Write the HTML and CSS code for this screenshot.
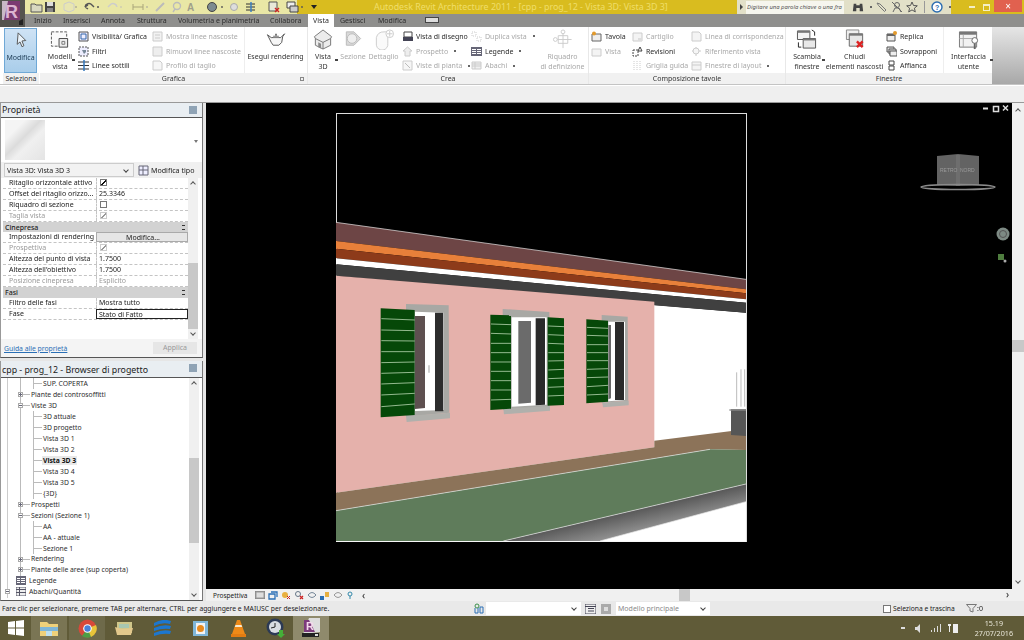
FILE: index.html
```html
<!DOCTYPE html>
<html lang="it">
<head>
<meta charset="utf-8">
<title>Autodesk Revit Architecture 2011</title>
<link rel="stylesheet" href="styles.css">
</head>
<body>
<div class="app">
  <header class="head">
    <div class="logo"><svg width="25" height="27" viewBox="0 0 25 27"><rect width="25" height="27" fill="#55544e"/><path d="M2 1h18v19H2z" fill="#7b3a72"/><path d="M2 1h6L4 20H2z" fill="#c9b9c6"/><text x="5" y="18" class="logo-r">R</text><path d="M19 21l4-2v6h-4z" fill="#222"/></svg></div>
    <div class="titlebar">
      <div class="qat">
        <svg width="14" height="12" viewBox="0 0 14 12"><path d="M1 3h4l1 1h6v7H1z" fill="#d8d8c0" stroke="#555"/></svg>
        <svg width="12" height="12" viewBox="0 0 12 12"><path d="M1 1h10v10H1z" fill="#444"/><path d="M3 1h6v4H3z" fill="#ddd"/><path d="M3 7h6v4H3z" fill="#888"/></svg>
        <svg class="gap-s" width="16" height="12" viewBox="0 0 16 12"><path d="M3 3l5-2 5 2v6l-5 2-5-2z" fill="#e8e6b0" stroke="#ccc"/><circle cx="15" cy="6" r=".8" fill="#888"/></svg>
        <svg class="gap-s" width="18" height="12" viewBox="0 0 18 12"><path d="M3 6a4 4 0 0 1 7-2l2 2M3 6l3-2M3 6l3 2" fill="none" stroke="#555" stroke-width="1.4"/><circle cx="16" cy="6" r="1" fill="#555"/></svg>
        <svg class="gap-s" width="18" height="12" viewBox="0 0 18 12"><path d="M12 6a4 4 0 0 0-7-2L3 6" fill="none" stroke="#ccc" stroke-width="1.4"/><circle cx="16" cy="6" r=".8" fill="#bbb"/></svg>
        <span class="qat-gap"></span>
        <svg width="18" height="12" viewBox="0 0 18 12"><path d="M2 3v6M12 3v6M2 6h10" stroke="#a9a57a" fill="none"/><circle cx="16" cy="6" r=".8" fill="#999"/></svg>
        <svg class="gap-s" width="12" height="12" viewBox="0 0 12 12"><path d="M2 10l8-8" stroke="#bbb" stroke-width="2"/></svg>
        <svg class="gap-s" width="12" height="12" viewBox="0 0 12 12"><circle cx="6" cy="5" r="3.5" fill="none" stroke="#bbb" stroke-width="1.4"/><path d="M4 8l-2 3" stroke="#bbb" stroke-width="1.4"/></svg>
        <span class="qat-a">A</span>
        <span class="qat-sep"></span>
        <svg width="18" height="12" viewBox="0 0 18 12"><circle cx="6" cy="6" r="4.5" fill="#7d8b90" stroke="#444"/><circle cx="16" cy="6" r=".9" fill="#555"/></svg>
        <svg class="gap-s" width="10" height="12" viewBox="0 0 10 12"><circle cx="5" cy="6" r="3.5" fill="#ddd" stroke="#aaa"/></svg>
        <svg class="gap-m" width="11" height="12" viewBox="0 0 11 12"><path d="M1 3h9M1 6h9M1 9h9" stroke="#333"/><path d="M6 1v10" stroke="#3a7fc0" stroke-width="1.5"/></svg>
        <span class="qat-sep"></span>
        <svg width="12" height="12" viewBox="0 0 12 12"><path d="M1 1h8v9H1z" fill="#e8e8d8" stroke="#555"/><path d="M7 7l4 4M11 7l-4 4" stroke="#c22" stroke-width="1.4"/></svg>
        <svg class="gap-m" width="20" height="12" viewBox="0 0 20 12"><path d="M1 1h8v6H1z" fill="#eee" stroke="#444"/><path d="M4 5h8v6H4z" fill="#ccc" stroke="#444"/><circle cx="16" cy="6" r=".9" fill="#555"/></svg>
        <span class="qat-more"></span>
      </div>
      <div class="title">Autodesk Revit Architecture 2011 - [cpp - prog_12 - Vista 3D: Vista 3D 3]</div>
      <div class="search">
        <span class="search-arrow"></span>
        <span class="search-box">Digitare una parola chiave o una fra</span>
        <svg width="12" height="11" viewBox="0 0 14 11"><path d="M2 1h3v9H1zM9 1h3l1 9H9zM5 3h4v3H5z" fill="#444"/></svg>
        <i class="dot"></i>
        <svg width="13" height="12" viewBox="0 0 13 12"><path d="M2 2l3 1 6 6-1.5 1.5-6-6z" fill="none" stroke="#777"/></svg>
        <svg width="12" height="12" viewBox="0 0 12 12"><circle cx="6" cy="4" r="2.5" fill="none" stroke="#666"/><path d="M2 11l2-4h4l2 4M1 1l10 10" fill="none" stroke="#666"/></svg>
        <svg width="12" height="12" viewBox="0 0 12 12"><path d="M6 1l1.5 3.5 3.8.3-2.9 2.4.9 3.7L6 8.9 2.700 10.900l.9-3.700L.7 4.800l3.800-.3z" fill="none" stroke="#555"/></svg>
        <span class="search-sep"></span>
        <svg width="12" height="12" viewBox="0 0 12 12"><circle cx="6" cy="6" r="5" fill="#fff" stroke="#2a6cb0" stroke-width="1.4"/><text x="4" y="9" class="help-q">?</text></svg>
        <i class="dot"></i>
      </div>
      <div class="winbtns">
        <span class="wb-min"></span>
        <span class="wb-max"></span>
        <span class="wb-close">×</span>
      </div>
    </div>
    <nav class="tabs">
      <span class="tab t1">Inizio</span>
      <span class="tab t2">Inserisci</span>
      <span class="tab t3">Annota</span>
      <span class="tab t4">Struttura</span>
      <span class="tab t5">Volumetria e planimetria</span>
      <span class="tab t6">Collabora</span>
      <span class="tab active">Vista</span>
      <span class="tab t8">Gestisci</span>
      <span class="tab t9">Modifica</span>
      <span class="tab-pill"></span>
    </nav>
  </header>

  <section class="ribbon">
    <div class="group g-sel">
      <div class="body">
        <div class="big selected">
          <svg class="ic" width="22" height="22" viewBox="0 0 22 22"><path d="M8 3l8 8-4 .5 2 5-2 1-2-5-3 2.500z" fill="#e8f2fa" stroke="#555"/></svg>
          <span>Modifica</span>
        </div>
      </div>
      <div class="label">Seleziona</div>
    </div>
    <div class="group g-gra">
      <div class="body">
        <div class="big w-mod">
          <svg class="ic" width="22" height="22" viewBox="0 0 22 22"><path d="M2 3h16v15H2z" fill="#fafafa" stroke="#555" stroke-dasharray="3 1.500"/><path d="M10 10h9v9h-9z" fill="#eee" stroke="#444"/><path d="M13 13h3v3h-3z" fill="none" stroke="#777"/></svg>
          <span>Modelli<br>vista</span><i class="caret"></i>
        </div>
        <div class="col w-vis">
          <div class="item"><svg width="11" height="11" viewBox="0 0 11 11"><path d="M1 1h9v9H1z" fill="#eef" stroke="#555"/><path d="M3 3h5v5H3z" fill="none" stroke="#36a"/></svg>Visibilità/ Grafica</div>
          <div class="item"><svg width="11" height="11" viewBox="0 0 11 11"><path d="M1 1h9v9H1z" fill="#eef" stroke="#555" stroke-dasharray="2 1"/><path d="M4 4h4v2L6 8z" fill="#789"/></svg>Filtri</div>
          <div class="item"><svg width="11" height="11" viewBox="0 0 11 11"><path d="M0 2h11M0 5.500h11M0 9h11" stroke="#333"/><path d="M6 0v11" stroke="#37b" stroke-width="1.500"/></svg>Linee sottili</div>
        </div>
        <div class="col dim w-mos">
          <div class="item"><svg width="11" height="11" viewBox="0 0 11 11"><path d="M1 1h9v9H1z" fill="#f2f2f2" stroke="#ccc"/><path d="M3 4h5M3 7h5" stroke="#ccc"/></svg>Mostra linee nascoste</div>
          <div class="item"><svg width="11" height="11" viewBox="0 0 11 11"><path d="M1 1h9v9H1z" fill="#eee" stroke="#ccc"/></svg>Rimuovi linee nascoste</div>
          <div class="item"><svg width="11" height="11" viewBox="0 0 11 11"><path d="M1 1h7l2 2v7H1z" fill="#f6f6f6" stroke="#ccc"/></svg>Profilo di taglio</div>
        </div>
        <div class="big w-ren sep-l">
          <svg class="ic" width="22" height="22" viewBox="0 0 22 22"><path d="M2 6l4 3h10l4-4-2 3-1 6-3 3H8l-2-3z" fill="#f6f6f6" stroke="#555"/><path d="M8 7h6v2H8z" fill="#999"/><path d="M10 5h2v2h-2z" fill="#777"/></svg>
          <span>Esegui rendering</span>
        </div>
      </div>
      <div class="label">Grafica<i class="launch"></i></div>
    </div>
    <div class="group g-cre">
      <div class="body">
        <div class="big w-3d">
          <svg class="ic" width="22" height="22" viewBox="0 0 22 22"><path d="M11 1l9 7-1 2v7l-8 4-8-4v-7L2 8z" fill="#ececec" stroke="#777"/><path d="M3 10l8 4 8-4M11 14v7" fill="none" stroke="#777"/><path d="M6 14l3 1.500v5L6 19z" fill="#8a8a8a"/></svg>
          <span>Vista<br>3D</span><i class="caret"></i>
        </div>
        <div class="big w-sez dim">
          <svg class="ic" width="22" height="22" viewBox="0 0 22 22"><path d="M4 3l8 0 7 7-7 7-8 0z" fill="#d9d9d9" stroke="#bbb"/><circle cx="10" cy="10" r="5" fill="#eee" stroke="#bbb"/></svg>
          <span>Sezione</span>
        </div>
        <div class="big w-det dim">
          <svg class="ic" width="22" height="22" viewBox="0 0 22 22"><path d="M3 9a8 8 0 0 1 8-6h4v12a5 5 0 0 1-12 2z" fill="#fafafa" stroke="#ccc"/><circle cx="17" cy="5" r="4" fill="#fff" stroke="#ccc"/><path d="M17 2v6M14 5h6" stroke="#ccc"/></svg>
          <span>Dettaglio</span>
        </div>
        <div class="col w-dis">
          <div class="item"><svg width="11" height="11" viewBox="0 0 11 11"><path d="M2 1h8v5H2z" fill="#fff" stroke="#444"/><path d="M1 6h10v4H1z" fill="#445"/></svg>Vista di disegno</div>
          <div class="item off"><svg width="11" height="11" viewBox="0 0 11 11"><path d="M5.500 1L10 5H8v5H3V5H1z" fill="#eee" stroke="#ccc"/></svg>Prospetto<i class="dot"></i></div>
          <div class="item off"><svg width="11" height="11" viewBox="0 0 11 11"><path d="M1 1h9v9H1z" fill="#f6f6f6" stroke="#ccc"/><path d="M3 3l5 5" stroke="#bbb"/></svg>Viste di pianta<i class="dot"></i></div>
        </div>
        <div class="col w-dup">
          <div class="item off"><svg width="11" height="11" viewBox="0 0 11 11"><path d="M1 1h4v4H1zM6 6h4v4H6z" fill="none" stroke="#ccc" stroke-dasharray="1 1"/></svg>Duplica vista<i class="dot"></i></div>
          <div class="item"><svg width="11" height="11" viewBox="0 0 11 11"><path d="M0 1h11v9H0z" fill="#667"/><path d="M1 3h4v1H1zM6 3h4v1H6zM1 5h4v1H1zM6 5h4v1H6zM1 7h4v1H1zM6 7h4v1H6z" fill="#fff"/></svg>Legende<i class="dot"></i></div>
          <div class="item off"><svg width="11" height="11" viewBox="0 0 11 11"><path d="M1 2h9v7H1z" fill="#f0f0f0" stroke="#ccc"/><path d="M1 4h9M1 6h9M4 2v7" stroke="#ccc"/></svg>Abachi<i class="dot"></i></div>
        </div>
        <div class="big w-riq dim">
          <svg class="ic" width="22" height="22" viewBox="0 0 22 22"><path d="M2 11h18M11 4v16" stroke="#ccc"/><path d="M6 7h10v8H6z" fill="none" stroke="#ccc"/><circle cx="11" cy="3" r="2" fill="#fff" stroke="#ccc"/><circle cx="3" cy="11" r="2" fill="#fff" stroke="#ccc"/></svg>
          <span>Riquadro<br>di definizione</span>
        </div>
      </div>
      <div class="label">Crea</div>
    </div>
    <div class="group g-com">
      <div class="body">
        <div class="col w-tav">
          <div class="item"><svg width="11" height="11" viewBox="0 0 11 11"><path d="M1 3h9v7H1z" fill="#eee" stroke="#666"/><circle cx="3" cy="2.500" r="2" fill="#e39a2c"/></svg>Tavola</div>
          <div class="item off"><svg width="11" height="11" viewBox="0 0 11 11"><path d="M1 3h9v7H1z" fill="#f4f4f4" stroke="#ccc"/></svg>Vista</div>
        </div>
        <div class="col w-car">
          <div class="item off"><svg width="11" height="11" viewBox="0 0 11 11"><path d="M1 2h9v8H1z" fill="#f4f4f4" stroke="#ccc"/><path d="M6 7h4v3H6z" fill="#ddd"/></svg>Cartiglio</div>
          <div class="item"><svg width="11" height="11" viewBox="0 0 11 11"><path d="M1 4h5v6H1z" fill="none" stroke="#444" stroke-dasharray="2 1"/><path d="M8 1l2 4H6z" fill="none" stroke="#444"/></svg>Revisioni</div>
          <div class="item off"><svg width="11" height="11" viewBox="0 0 11 11"><path d="M2 1v9M5 1v9M8 1v9" stroke="#ccc" stroke-dasharray="1 1"/></svg>Griglia guida</div>
        </div>
        <div class="col w-lin">
          <div class="item off"><svg width="11" height="11" viewBox="0 0 11 11"><path d="M1 1h7l2 2v7H1z" fill="#f4f4f4" stroke="#ccc"/></svg>Linea di corrispondenza</div>
          <div class="item off"><svg width="11" height="11" viewBox="0 0 11 11"><path d="M1 5h9M5 1v9" stroke="#ccc"/><circle cx="5" cy="5" r="3" fill="#f6f6f6" stroke="#ccc"/></svg>Riferimento vista</div>
          <div class="item off"><svg width="11" height="11" viewBox="0 0 11 11"><path d="M1 2h9v8H1z" fill="#f4f4f4" stroke="#ccc"/><path d="M1 5h9" stroke="#ccc"/></svg>Finestre di layout<i class="dot"></i></div>
        </div>
      </div>
      <div class="label">Composizione tavole</div>
    </div>
    <div class="group g-fin">
      <div class="body">
        <div class="big w-sca">
          <svg class="ic" width="22" height="22" viewBox="0 0 22 22"><path d="M1 2h13v9H1z" fill="#f4f4f4" stroke="#555"/><path d="M1 2h13v2H1z" fill="#777"/><path d="M7 10h13v10H7z" fill="#e8e8e8" stroke="#555"/><path d="M7 10h13v2H7z" fill="#777"/><path d="M16 1l3 2v4M2 14v5h3" fill="none" stroke="#222"/></svg>
          <span>Scambia<br>finestre</span><i class="caret"></i>
        </div>
        <div class="big w-chi">
          <svg class="ic" width="22" height="22" viewBox="0 0 22 22"><path d="M2 1h13v10H2z" fill="#eee" stroke="#888"/><path d="M5 5h14v13H5z" fill="#e6e6e6" stroke="#666"/><path d="M5 5h14v2H5z" fill="#777"/><path d="M13 13l6 6M19 13l-6 6" stroke="#d22" stroke-width="2.500"/></svg>
          <span>Chiudi<br>elementi nascosti</span>
        </div>
        <div class="col w-rep">
          <div class="item"><svg width="11" height="11" viewBox="0 0 11 11"><path d="M1 3h8v7H1z" fill="#eee" stroke="#555"/><path d="M1 3h8v2H1z" fill="#666"/><circle cx="9" cy="2" r="2" fill="#e39a2c"/></svg>Replica</div>
          <div class="item"><svg width="11" height="11" viewBox="0 0 11 11"><path d="M1 1h7v5H1z" fill="#ddd" stroke="#555"/><path d="M3 3h7v5H3z" fill="#ddd" stroke="#555"/><path d="M4 5h7v5H4z" fill="#eee" stroke="#555"/></svg>Sovrapponi</div>
          <div class="item"><svg width="11" height="11" viewBox="0 0 11 11"><path d="M3 1h5v4H3zM3 6h5v4H3z" fill="#fff" stroke="#444"/></svg>Affianca</div>
        </div>
        <div class="big w-int sep-l">
          <svg class="ic" width="22" height="22" viewBox="0 0 22 22"><path d="M1 3h18v16H1z" fill="#f2f2f2" stroke="#777"/><path d="M1 3h18v3H1z" fill="#777"/><path d="M5 6v13M1 10h14" stroke="#aaa"/><circle cx="17" cy="12" r="3" fill="#fff" stroke="#666"/><path d="M17 15v6" stroke="#666" stroke-width="2"/></svg>
          <span>Interfaccia<br>utente</span><i class="caret"></i>
        </div>
      </div>
      <div class="label">Finestre</div>
    </div>
    <div class="ribbon-end"></div>
  </section>
  <div class="strip"></div>

  <main class="main">
    <aside class="side">
      <section class="panel props">
        <h2 class="panel-head">Proprietà<i class="panel-x"></i></h2>
        <div class="preview"><div class="thumb"></div><i class="pv-arrow"></i></div>
        <div class="type-row">
          <div class="combo">Vista 3D: Vista 3D 3<i class="chev"></i></div>
          <svg width="11" height="11" viewBox="0 0 11 11"><path d="M1 1h9v9H1z" fill="#eef" stroke="#667"/><path d="M1 5h9M5 1v9" stroke="#667"/></svg>
          <span class="type-btn">Modifica tipo</span>
        </div>
        <div class="grid-wrap">
          <div class="rows">
            <div class="row"><span>Ritaglio orizzontale attivo</span><span><i class="chk on"></i></span></div>
            <div class="row"><span>Offset del ritaglio orizzo...</span><span>25.3346</span></div>
            <div class="row"><span>Riquadro di sezione</span><span><i class="chk"></i></span></div>
            <div class="row off"><span>Taglia vista</span><span><i class="chk on dis"></i></span></div>
            <div class="sec">Cinepresa<i class="fold"></i></div>
            <div class="row"><span>Impostazioni di rendering</span><span class="btn">Modifica...</span></div>
            <div class="row off"><span>Prospettiva</span><span><i class="chk on dis"></i></span></div>
            <div class="row"><span>Altezza del punto di vista</span><span>1.7500</span></div>
            <div class="row"><span>Altezza dell'obiettivo</span><span>1.7500</span></div>
            <div class="row off"><span>Posizione cinepresa</span><span>Esplicito</span></div>
            <div class="sec">Fasi<i class="fold"></i></div>
            <div class="row"><span>Filtro delle fasi</span><span>Mostra tutto</span></div>
            <div class="row"><span>Fase</span><span class="focus">Stato di Fatto</span></div>
          </div>
          <div class="sbar s-prop"><i class="up"></i><i class="thumb-bar"></i><i class="down"></i></div>
        </div>
        <div class="panel-foot"><a class="help" href="#">Guida alle proprietà</a><span class="apply">Applica</span></div>
      </section>
      <section class="panel browser">
        <h2 class="panel-head">cpp - prog_12 - Browser di progetto<i class="panel-x"></i></h2>
        <div class="tree-wrap">
          <div class="tree">
            <div class="n lv3">SUP. COPERTA</div>
            <div class="n lv2"><i class="exp plus"></i>Piante dei controsoffitti</div>
            <div class="n lv2"><i class="exp minus"></i>Viste 3D</div>
            <div class="n lv3">3D attuale</div>
            <div class="n lv3">3D progetto</div>
            <div class="n lv3">Vista 3D 1</div>
            <div class="n lv3">Vista 3D 2</div>
            <div class="n lv3"><b>Vista 3D 3</b></div>
            <div class="n lv3">Vista 3D 4</div>
            <div class="n lv3">Vista 3D 5</div>
            <div class="n lv3">{3D}</div>
            <div class="n lv2"><i class="exp plus"></i>Prospetti</div>
            <div class="n lv2"><i class="exp minus"></i>Sezioni (Sezione 1)</div>
            <div class="n lv3">AA</div>
            <div class="n lv3">AA - attuale</div>
            <div class="n lv3">Sezione 1</div>
            <div class="n lv2"><i class="exp plus"></i>Rendering</div>
            <div class="n lv2"><i class="exp plus"></i>Piante delle aree (sup coperta)</div>
            <div class="n lv1 leaf"><svg width="10" height="9" viewBox="0 0 10 9"><path d="M0 0h10v9H0z" fill="#667"/><path d="M1 2h3v1H1zM5 2h4v1H5zM1 4h3v1H1zM5 4h4v1H5zM1 6h3v1H1zM5 6h4v1H5z" fill="#fff"/></svg>Legende</div>
            <div class="n lv1"><i class="exp minus"></i><svg width="10" height="9" viewBox="0 0 10 9"><path d="M0 0h10v9H0z" fill="#eee" stroke="#556"/><path d="M0 2.500h10M0 5.500h10M3.500 0v9" stroke="#556"/></svg>Abachi/Quantità</div>
          </div>
          <div class="sbar s-tree"><i class="up"></i><i class="thumb-bar"></i><i class="down"></i></div>
        </div>
      </section>
    </aside>

    <div class="viewport">
      <div class="canvas">
        <svg class="scene" width="806" height="486" viewBox="206 103 806 486">
          <defs>
            <linearGradient id="road" gradientUnits="userSpaceOnUse" x1="884" y1="907" x2="920" y2="1063">
              <stop offset="0" stop-color="#585858"/><stop offset=".45" stop-color="#969696"/><stop offset="1" stop-color="#f4f4f4"/>
            </linearGradient>
          </defs>
          <rect x="336.500" y="113.500" width="410" height="428" fill="#000" stroke="#ddd"/>
          <g transform="translate(330 210) scale(.33333)">
            <path d="M973 285L1248 308V995H18V850z" fill="#fff"/>
            <path d="M18 37L1248 208V238L18 93z" fill="#6d4545"/>
            <path d="M18 93L1248 238V250L18 116z" fill="#e8803a"/>
            <path d="M18 116L1248 250V268L18 145z" fill="#8d3b1a"/>
            <path d="M18 145L1248 268V278L18 163z" fill="#fff"/>
            <path d="M18 163L1248 278V308L973 286L18 197z" fill="#404040"/>
            <path d="M18 197L973 275V712L18 848z" fill="#e5b1ab"/>
            <path d="M18 848L973 712V692L1205 663L1248 665V720L1140 718L18 902z" fill="#8c7359"/>
            <path d="M18 902L1140 718L1248 720V822L520 993H18z" fill="#5f7c5b"/>
            <path d="M520 993L1248 822V875L810 993z" fill="url(#road)"/>
            <path d="M18 902L1140 718M520 993L1248 822M810 993L1248 875" fill="none" stroke="#e8e8e8" stroke-width="2"/>
            <path d="M18 37L1248 208" fill="none" stroke="#eee" stroke-width="2"/>
            <path d="M1203 598H1248V678L1203 675z" fill="#565656"/>
            <path d="M1198 600H1248" stroke="#888" stroke-width="4"/>
            <path d="M1220 487V590M1233 478V590M1244 478V590" stroke="#999" stroke-width="2"/>

            <path d="M228 282L356 286L358 608L228 620z" fill="#a8a8a4"/>
            <path d="M228 618L360 608V625L230 636z" fill="#b0b0ac"/>
            <path d="M255 305L342 308V600L255 603z" fill="#fff"/>
            <path d="M255 318H285V594L255 597z" fill="#5e5050"/>
            <path d="M315 308H340V604L315 604z" fill="#2c2c2c"/>
            <path d="M295 466h4v22h-4z" fill="#bbb"/>
            <path d="M152 295L254 300V615L152 622z" fill="#064808"/>
            <path d="M154 326L254 330M154 360L254 362M154 392L254 393M154 425L254 425M154 458L254 456M154 490L254 487M154 522L254 518M154 555L254 550M154 590L254 582" stroke="#c8e4c0" stroke-width="2.200" fill="none"/>

            <path d="M518 297L658 306V595L520 600z" fill="#a8a8a4"/>
            <path d="M520 596L660 588V602L522 613z" fill="#b0b0ac"/>
            <path d="M545 322L650 322V584L545 590z" fill="#fff"/>
            <path d="M565 333H603V578L565 581z" fill="#6b6b6b"/>
            <path d="M617 325H645V584L617 586z" fill="#2a2a2a"/>
            <path d="M481 314L543 316V596L481 600z" fill="#064808"/>
            <path d="M653 322L702 325V585L653 587z" fill="#064808"/>
            <path d="M483 342L543 344M483 370L543 372M483 400L543 400M483 428L543 428M483 456L543 456M483 484L543 484M483 512L543 512M483 540L543 540M483 570L543 568M655 348L702 350M655 374L702 376M655 400L702 402M655 428L702 428M655 453L702 452M655 480L702 478M655 506L702 504M655 532L702 530M655 558L702 556" stroke="#c8e4c0" stroke-width="2.200" fill="none"/>

            <path d="M815 315L893 320L895 572L815 578z" fill="#a8a8a4"/>
            <path d="M817 578L896 572V586L819 592z" fill="#b0b0ac"/>
            <path d="M835 335L885 335V570L835 574z" fill="#fff"/>
            <path d="M855 336H882V570L855 570z" fill="#2a2a2a"/>
            <path d="M835 345H843V565L835 568z" fill="#686868"/>
            <path d="M769 328L834 332V575L769 580z" fill="#064808"/>
            <path d="M771 352L834 355M771 376L834 378M771 404L834 404M771 428L834 428M771 452L834 452M771 478L834 476M771 503L834 501M771 530L834 526M771 555L834 552" stroke="#c8e4c0" stroke-width="2.200" fill="none"/>
          </g>
          <path d="M983 108.500h5" stroke="#ddd" stroke-width="2"/>
          <path d="M993.500 106.500h5v5h-5z" fill="none" stroke="#ddd" stroke-width="1.500"/>
          <path d="M1003 105.500l5 5M1008 105.500l-5 5" stroke="#ddd" stroke-width="1.500"/>
          <path d="M937 156l21-2 21 2 0 29-21 1-21-1z" fill="#636363"/>
          <path d="M956 155h4v31h-4z" fill="#6e6e6e"/>
          <text x="940" y="172" class="cube">RETRO</text>
          <text x="960" y="172" class="cube">NORD</text>
          <ellipse cx="958" cy="187" rx="37" ry="2.600" fill="none" stroke="#8a8a8a" stroke-width="1.500"/>
          <circle cx="1003" cy="234" r="6.500" fill="#7d8a84"/>
          <circle cx="1003" cy="234" r="3.500" fill="none" stroke="#555"/>
          <rect x="998" y="254" width="6" height="6" fill="#4f7d3f"/>
          <circle cx="1005" cy="261" r="1.500" fill="#aaa"/>
        </svg>
      </div>
      <div class="vscroll"><i class="up"></i><i class="vthumb"></i><i class="down"></i></div>
      <div class="viewbar">
        <span class="scale">Prospettiva</span>
        <div class="vb-icons">
          <svg width="10" height="8" viewBox="0 0 10 8"><path d="M0 0h10v8H0z" fill="#888"/><path d="M1 1h8v6H1z" fill="#ddd" stroke="#999"/></svg>
          <svg width="10" height="9" viewBox="0 0 10 9"><path d="M1 3h6v5H1zM3 1h6v5" fill="none" stroke="#2a6fb5" stroke-width="1.300"/></svg>
          <svg width="10" height="9" viewBox="0 0 10 9"><circle cx="4" cy="4" r="3" fill="#e8b040"/><path d="M6 5l3 3M9 5L6 8" stroke="#c22"/></svg>
          <svg width="10" height="9" viewBox="0 0 10 9"><circle cx="4" cy="3" r="2.500" fill="none" stroke="#678"/><path d="M6 5l3 3M9 5L6 8" stroke="#c22" stroke-width="1.200"/></svg>
          <svg width="10" height="9" viewBox="0 0 10 9"><path d="M1 4q4-5 8 0-4 5-8 0z" fill="none" stroke="#789"/></svg>
          <svg width="10" height="9" viewBox="0 0 10 9"><path d="M0 5h4v4H0z" fill="#2a6fb5"/><path d="M5 1h4v5H5z" fill="#e8b040"/></svg>
          <svg width="10" height="9" viewBox="0 0 10 9"><path d="M1 4q4-5 8 0-4 5-8 0z" fill="none" stroke="#999"/></svg>
          <svg width="8" height="9" viewBox="0 0 8 9"><circle cx="4" cy="3" r="2" fill="none" stroke="#38a"/><path d="M4 5v3" stroke="#38a"/></svg>
          <span class="lt">‹</span>
        </div>
        <i class="hthumb"></i>
        <span class="gt">›</span>
      </div>
    </div>
  </main>

  <footer class="status">
    <span class="hint">Fare clic per selezionare, premere TAB per alternare, CTRL per aggiungere e MAIUSC per deselezionare.</span>
    <svg class="st-ic" width="10" height="11" viewBox="0 0 10 11"><circle cx="3" cy="3" r="2" fill="none" stroke="#3a8f4a"/><path d="M1 5v5h3V5M6 4h3v6H6z" fill="none" stroke="#2a6fb5"/></svg>
    <span class="st-combo c1"><i class="chev"></i></span>
    <svg class="st-ic2" width="11" height="10" viewBox="0 0 11 10"><path d="M0 0h11v10H0z" fill="#eee" stroke="#445"/><path d="M0 2.500h11M3 4.500h6M3 7h6" stroke="#445"/></svg>
    <svg class="st-ic3" width="10" height="10" viewBox="0 0 10 10"><path d="M0 0h10v10H0z" fill="#aaa"/><path d="M3 3h4v4H3z" fill="#ddd"/></svg>
    <span class="st-combo c2">Modello principale<i class="chev"></i></span>
    <i class="chk st-chk"></i>
    <span class="st-sel">Seleziona e trascina</span>
    <svg class="st-filter" width="11" height="9" viewBox="0 0 11 9"><path d="M.5.500h10L7 4.500V8L4 7V4.500z" fill="none" stroke="#777"/></svg>
    <span class="st-count">:0</span>
  </footer>

  <footer class="taskbar">
    <span class="tb win"><svg width="16" height="16" viewBox="0 0 16 16"><path d="M0 2l7-1v6.500H0zM8 1l8-1v7.500H8zM0 8.500h7V15l-7-1zM8 8.500h8V16l-8-1z" fill="#fff"/></svg></span>
    <span class="tb lit"><svg width="20" height="18" viewBox="0 0 20 18"><path d="M1 3h7l2 2h9v12H1z" fill="#efd17a"/><path d="M1 8h18v4H1z" fill="#7fb6d8"/><path d="M7 12h6v5H7z" fill="#bfe0ef"/></svg></span>
    <span class="tb lit2"><svg width="19" height="19" viewBox="0 0 19 19"><circle cx="9.500" cy="9.500" r="9" fill="#d8483a"/><path d="M9.500 9.500L17 14a9 9 0 0 1-13 3z" fill="#4d9e45"/><path d="M9.500 9.500L18 6a9 9 0 0 1-5 12z" fill="#e8c43a"/><circle cx="9.500" cy="9.500" r="4.300" fill="#fff"/><circle cx="9.500" cy="9.500" r="3.200" fill="#4a80d8"/></svg></span>
    <span class="tb"><svg width="20" height="18" viewBox="0 0 20 18"><path d="M3 3h15v11H3z" fill="#cfc78a"/><path d="M1 8l7 2 11-1-2 7H3z" fill="#e3c98c"/><path d="M5 5h10v4H5z" fill="#a8c7b0"/></svg></span>
    <span class="tb"><svg width="20" height="16" viewBox="0 0 20 16"><path d="M2 3q9-5 17-2l-1 3q-8-2-16 2zM2 8q9-4 17-2l-1 3q-8-1-16 2zM2 13q9-4 17-2l-1 3q-8-1-16 2z" fill="#1c77d0"/></svg></span>
    <span class="tb"><svg width="17" height="17" viewBox="0 0 17 17"><path d="M1 1h15v15H1z" fill="#7fb6d8"/><path d="M4 3h9v11H4z" fill="#f2f2f2"/><circle cx="8.500" cy="8.500" r="3.500" fill="#e8891c"/></svg></span>
    <span class="tb"><svg width="17" height="19" viewBox="0 0 17 19"><path d="M7 1h3l5 14H2z" fill="#ee8a18"/><path d="M5.500 6h6l.7 2H4.800z" fill="#f6e9d0"/><path d="M1 15h15v3H1z" fill="#e27c12"/></svg></span>
    <span class="tb"><svg width="20" height="20" viewBox="0 0 20 20"><circle cx="9" cy="9" r="8.500" fill="#2c3a55"/><circle cx="9" cy="9" r="6" fill="#d9dde2"/><path d="M9 5v4l-4 1" stroke="#222" fill="none"/><path d="M13 12h4v4h2l-4 4-4-4h2z" fill="#45b038"/></svg></span>
    <span class="tb rev"><svg width="20" height="20" viewBox="0 0 20 20"><path d="M2 16l6-16h11v14z" fill="#ddd"/><path d="M3 2l5 0 6 12H3z" fill="#7c3a7c"/><text x="5" y="12" class="logo-s">R</text><path d="M1 15h17v4H1z" fill="#222"/><path d="M14 16h3v2h-3z" fill="#ddd"/></svg></span>
    <span class="tray">
      <i class="tr-up"></i>
      <svg width="8" height="9" viewBox="0 0 8 9"><path d="M0 3h2l3-3v9L2 6H0z" fill="#ddd"/></svg>
      <svg width="11" height="8" viewBox="0 0 11 8"><path d="M1 6h1v2H1zM4 4h1v4H4zM7 2h1v6H7zM10 0h1v8h-1z" fill="#ddd"/></svg>
      <svg width="10" height="11" viewBox="0 0 10 11"><path d="M0 1h3v2H2v6H1V3H0z" fill="#eee"/><path d="M5 1h5v9H5z" fill="#eee"/></svg>
      <span class="clock">15.19<br>27/07/2016</span>
    </span>
  </footer>
</div>
</body>
</html>
```
FILE: styles.css
```css
* { box-sizing: border-box; }
html, body { margin: 0; height: 100%; overflow: hidden; }
body { font-family: "Noto Sans", "Open Sans", sans-serif; font-size: 7px; color: #222; }
i { display: block; font-style: normal; }
svg { display: block; flex: none; }
.app { width: 1024px; height: 640px; display: flex; flex-direction: column; filter: blur(.45px); background: #efefef; }

/* head */
.head { display: grid; grid-template-columns: 25px 1fr; grid-template-rows: 14px 13px; height: 27px; }
.logo { grid-row: 1 / 3; }
.logo-r { font: bold 18px "Liberation Sans", sans-serif; fill: #dcb4d2; }
.logo-s { font: bold 11px "Liberation Sans", sans-serif; fill: #f4d8ec; }
.titlebar { display: flex; align-items: center; background: #d9bc1f; }
.qat { display: flex; align-items: center; height: 14px; width: 272px; padding-left: 5px; background: #e9e7a6; flex: none; }
.gap-s { margin-left: 5px; }
.gap-m { margin-left: 6px; }
.qat-gap { width: 8px; height: 14px; background: #efeec2; margin: 0 3px 0 5px; }
.qat-a { font: bold 10px "Liberation Sans", sans-serif; color: #a0a08a; margin-left: 4px; }
.qat-sep { width: 1px; height: 12px; background: #666; margin: 0 6px; }
.qat-more { width: 0; height: 0; border: 3px solid transparent; border-top: 4px solid #222; margin: 3px 0 0 5px; }
.title { margin-left: 77px; font-size: 8.850px; color: #f0de6a; white-space: nowrap; width: 368px; flex: none; }
.search { display: flex; align-items: center; gap: 3px; width: 214px; height: 14px; margin-left: -5px; padding: 0 0 0 3px; background: #e2e0c8; flex: none; }
.search-arrow { border: 3px solid transparent; border-left: 3px solid #444; border-right: 0; }
.search-box { width: 106px; height: 13px; margin: 0 5px 0 0; padding-left: 1px; background: #f6f6ee; font-style: italic; font-size: 5.900px; line-height: 13px; color: #555; white-space: nowrap; }
.search-sep { width: 1px; height: 12px; background: #999; margin: 0 3px; }
.help-q { font: bold 7px "Liberation Sans", sans-serif; fill: #2a6cb0; }
.dot { width: 2px; height: 2px; background: #666; margin-left: 3px; flex: none; }
.winbtns { display: flex; align-items: center; margin-left: auto; height: 14px; }
.wb-min { width: 6px; height: 2px; background: #f4efc6; margin-right: 8px; }
.wb-max { width: 7px; height: 7px; border: 1px solid #f4efc6; border-top-width: 2px; margin-right: 4px; }
.wb-close { width: 28px; height: 12px; margin: 0 2px 2px 0; background: #e1614f; color: #fff; font-size: 10px; line-height: 12px; text-align: center; }
.tabs { display: flex; align-items: flex-end; background: #8f8f8d; height: 13px; }
.tab { height: 13px; line-height: 13px; font-size: 7px; color: #2c2c2c; white-space: nowrap; flex: none; }
.t1 { margin-left: 9px; width: 29px; }
.t2 { width: 38px; }
.t3 { width: 36px; }
.t4 { width: 41px; }
.t5 { width: 92px; }
.t6 { width: 38px; }
.tab.active { width: 26px; background: #fff; text-align: center; }
.t8 { margin-left: 6px; width: 38px; }
.t9 { width: 47px; }
.tab-pill { width: 14px; height: 6px; border: 1px solid #444; background: #ddd; margin-bottom: 4px; }

/* ribbon */
.ribbon { display: flex; height: 57px; background: #fff; padding-left: 3px; flex: none; }
.group { display: flex; flex-direction: column; flex: none; }
.g-sel { width: 36px; margin-right: 1px; }
.g-gra { width: 267px; }
.g-cre { width: 281px; border-left: 1px solid #e8e8e8; }
.g-com { width: 197px; border-left: 1px solid #e8e8e8; }
.g-fin { width: 207px; border-left: 1px solid #e8e8e8; }
.ribbon-end { flex: 1; background: linear-gradient(#e6e6e6, #a8a8a8); }
.body { flex: 1; display: flex; min-height: 0; }
.label { height: 11px; line-height: 11px; background: #f1f1f1; text-align: center; color: #333; position: relative; }
.launch { position: absolute; right: 3px; top: 4px; width: 4px; height: 4px; border: 1px solid #888; }
.big { position: relative; display: flex; flex-direction: column; align-items: center; padding-top: 2px; text-align: center; line-height: 10px; flex: none; white-space: nowrap; color: #333; }
.big .ic { margin-bottom: 2px; height: 21px; }
.selected { width: 33px; height: 45px; margin: 1px 0 0 1px; background: linear-gradient(#cfe3f5, #a9cdea); border: 1px solid #6fa8d6; color: #1d3b55; }
.selected .ic { margin-top: -1px; }
.dim, .dim span { color: #a9a9a9; }
.caret { position: absolute; right: 0; bottom: 12px; width: 3px; height: 2px; background: #444; }
.sep-l { border-left: 1px solid #eee; }
.col { display: flex; flex-direction: column; padding-top: 2px; flex: none; }
.item { display: flex; align-items: center; gap: 3px; height: 15px; white-space: nowrap; color: #2c2c2c; }
.dim .item, .item.off { color: #a9a9a9; }
.w-mod { width: 30px; margin-left: 5px; }
.w-vis { width: 74px; margin-left: 3px; }
.w-mos { width: 92px; }
.w-ren { width: 62px; }
.w-3d { width: 30px; }
.w-sez { width: 30px; }
.w-det { width: 31px; }
.w-dis { width: 69px; margin-left: 3px; }
.w-dup { width: 68px; }
.w-riq { width: 47px; }
.w-tav { width: 41px; margin-left: 2px; }
.w-car { width: 59px; }
.w-lin { width: 92px; }
.w-sca { width: 36px; margin-left: 3px; }
.w-chi { width: 59px; }
.w-rep { width: 57px; margin-left: 2px; }
.w-int { width: 50px; }
.strip { height: 19px; flex: none; background: #efefef; border-top: 1px solid #c4c4c4; border-bottom: 1px solid #999; box-shadow: inset 0 1px 0 #fff; }

/* side */
.main { display: flex; height: 498px; flex: none; }
.side { width: 206px; display: flex; flex-direction: column; gap: 3px; padding-right: 3px; flex: none; background: #e6e6e6; }
.panel { background: #f0f0f0; border-right: 1px solid #777; border-bottom: 1px solid #555; border-left: 1px solid #999; display: flex; flex-direction: column; }
.props { height: 255px; }
.browser { height: 240px; }
.panel-head { position: relative; margin: 0; height: 15px; flex: none; background: #e9eef2; border-bottom: 1px solid #555; font-weight: 400; font-size: 8.800px; line-height: 15px; padding-left: 1px; color: #222; }
.browser .panel-head { height: 17px; line-height: 18px; }
.panel-x { position: absolute; right: 5px; top: 3px; width: 8px; height: 8px; background: #8fa3b5; }
.preview { height: 44px; flex: none; position: relative; background: #fff; padding: 2px 0 0 4px; }
.thumb { width: 40px; height: 40px; background: linear-gradient(135deg, #f4f4f4 25%, #dcdcdc 45%, #f0f0f0 60%, #e4e4e4); }
.pv-arrow { position: absolute; right: 4px; top: 22px; border: 2px solid transparent; border-top: 3px solid #777; }
.type-row { display: flex; align-items: center; height: 16px; padding-left: 3px; flex: none; }
.combo { position: relative; width: 130px; height: 14px; line-height: 14px; padding-left: 2px; background: #f2f2f2; border: 1px solid #ccc; margin-right: 4px; }
.chev { position: absolute; right: 5px; top: 4px; width: 4px; height: 4px; border-right: 1px solid #444; border-bottom: 1px solid #444; transform: rotate(45deg); }
.type-btn { margin-left: 2px; font-size: 7.100px; white-space: nowrap; }
.grid-wrap { display: flex; height: 161px; flex: none; background: #fff; padding-left: 2px; }
.rows { width: 185px; flex: none; }
.row { display: grid; grid-template-columns: 93px 1fr; height: 10.900px; line-height: 10px; border-bottom: 1px dashed #c4c4c4; color: #222; white-space: nowrap; }
.row > span { padding-left: 6px; overflow: hidden; }
.row > span + span { padding-left: 2px; border-left: 1px dashed #c4c4c4; }
.row.off { color: #9a9a9a; }
.sec { position: relative; height: 10.900px; line-height: 11px; background: #d2d2d2; padding-left: 2px; font-weight: 500; }
.fold { position: absolute; right: 3px; top: 3px; width: 3px; height: 5px; border-top: 1px solid #333; border-bottom: 1px solid #333; }
.chk { width: 7px; height: 7px; margin: 1px 0 0 1px; border: 1px solid #777; background: #fff; }
.chk.on { background: linear-gradient(135deg, #fff 40%, #111 41%, #111 60%, #fff 61%); }
.chk.dis { border-color: #ccc; background: linear-gradient(135deg, #fff 40%, #999 41%, #999 60%, #fff 61%); }
.row > .btn { background: #e6e6e6; border: 1px solid #aaa; text-align: center; }
.row > .focus { border: 1px solid #222; background: #fff; }
.sbar { position: relative; width: 10px; flex: none; background: #f0f0f0; }
.up, .down { position: absolute; left: 3px; width: 4px; height: 4px; border-left: 1px solid #555; border-top: 1px solid #555; transform: rotate(45deg); }
.up { top: 4px; }
.down { bottom: 4px; transform: rotate(225deg); }
.thumb-bar { position: absolute; left: 0; right: 0; background: #c8c8c8; }
.s-prop .thumb-bar { top: 85px; height: 66px; }
.s-tree .thumb-bar { top: 80px; height: 85px; }
.panel-foot { flex: 1; display: flex; align-items: center; justify-content: space-between; padding: 0 5px 0 3px; background: #f4f4f4; }
.help { font-size: 6.800px; color: #2a6fb5; }
.apply { width: 44px; height: 12px; line-height: 12px; text-align: center; background: #e6e6e6; color: #999; }
.tree-wrap { display: flex; flex: 1; min-height: 0; background: #fff; padding-left: 1px; overflow: hidden; }
.tree { width: 187px; flex: none; background: linear-gradient(#bbb, #bbb) 18px 0 / 1px 198px no-repeat, linear-gradient(#ccc, #ccc) 5px 0 / 1px 220px no-repeat; }
.n { position: relative; display: flex; align-items: center; height: 10.970px; white-space: nowrap; color: #2c2c2c; font-size: 6.800px; }
.lv1 { padding-left: 14px; }
.lv1 svg { margin-right: 3px; }
.lv2 { padding-left: 29px; }
.lv3 { padding-left: 41px; background: linear-gradient(#bbb, #bbb) 31px 0 / 1px 100% no-repeat; }
.lv3::before { content: ""; position: absolute; left: 31px; top: 5px; width: 9px; border-top: 1px solid #bbb; }
.lv2::before { content: ""; position: absolute; left: 20px; top: 5px; width: 8px; border-top: 1px solid #bbb; }
.n b { background: #e8e8e8; font-weight: 700; padding: 0 1px; margin-left: -1px; color: #111; }
.exp { position: absolute; width: 5px; height: 5px; top: 3px; left: 16px; border: 1px solid #aaa; background: #fff; z-index: 1; }
.lv1 .exp { left: 3px; }
.plus { background: linear-gradient(#667, #667) center / 3px 1px no-repeat, linear-gradient(#667, #667) center / 1px 3px no-repeat, #fff; }
.minus { background: linear-gradient(#667, #667) center / 3px 1px no-repeat, #fff; }

/* viewport */
.viewport { flex: 1; display: grid; grid-template-columns: 806px 12px; grid-template-rows: 486px 12px; min-width: 0; }
.canvas { background: #000; overflow: hidden; }
.cube { font: 5px "Liberation Sans", sans-serif; fill: #9a9a9a; }
.vscroll { position: relative; background: #f0f0f0; }
.vscroll .up { left: 4px; top: 6px; }
.vscroll .down { left: 4px; bottom: 6px; }
.vthumb { position: absolute; left: 0; right: 0; top: 237px; height: 12px; background: #c8c8c8; }
.viewbar { grid-column: 1 / 3; position: relative; display: flex; align-items: center; background: #f0f0f0; padding-left: 7px; }
.scale { width: 42px; flex: none; font-size: 6.500px; }
.vb-icons { display: flex; align-items: center; gap: 3px; }
.lt { margin-left: 5px; font-size: 10px; line-height: 10px; }
.hthumb { position: absolute; left: 473px; top: 0; width: 11px; height: 12px; background: #c8c8c8; }
.gt { position: absolute; left: 800px; top: 0; font-size: 10px; line-height: 11px; }

/* status */
.status { display: flex; align-items: center; height: 15px; flex: none; background: #e9e9e9; }
.hint { width: 474px; padding-left: 2px; font-size: 6.780px; white-space: nowrap; flex: none; color: #222; }
.st-combo { position: relative; height: 13px; line-height: 13px; background: #fff; flex: none; padding-left: 2px; color: #8a8a8a; }
.c1 { width: 95px; margin-left: 2px; }
.c2 { width: 94px; margin-left: 5px; }
.st-ic2 { margin-left: 4px; }
.st-ic3 { margin-left: 5px; }
.st-chk { width: 8px; height: 8px; margin: 0 2px 0 173px; flex: none; }
.st-sel { width: 73px; flex: none; white-space: nowrap; font-size: 6.700px; }
.st-count { font-size: 7px; }

/* taskbar */
.taskbar { display: flex; align-items: center; height: 24px; flex: none; background: #605b38; }
.tb { display: flex; align-items: center; justify-content: center; height: 24px; flex: none; width: 38px; }
.win { width: 31px; }
.lit { width: 36px; background: #7a7554; }
.lit2 { width: 36px; background: #6e6a4a; margin-left: 2px; }
.rev { width: 36px; background: #8f8a6c; margin-left: -2px; }
.tray { margin-left: auto; display: flex; align-items: center; gap: 7px; padding-right: 11px; color: #e8e6d8; }
.tr-up { width: 4px; height: 2px; background: #ddd; margin-right: 3px; }
.clock { margin-left: 10px; font-size: 7.200px; line-height: 10px; text-align: center; }
```
